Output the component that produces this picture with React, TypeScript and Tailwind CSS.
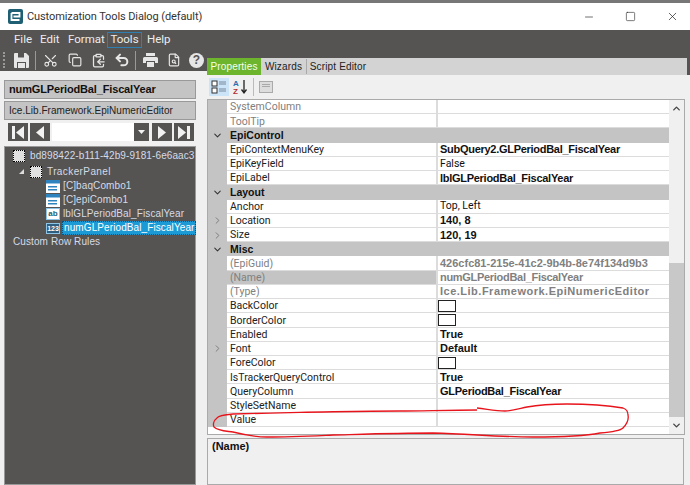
import { ChevronDown, ChevronRight, ChevronUp, ClipboardCopy, Copy, FileSearch, Minus, Scissors, Square, Undo2, X } from 'lucide-react';

type Row = {
  name: string;
  value?: string;
  kind?: 'category' | 'swatch';
  bold?: boolean;
  dim?: boolean;
  expand?: boolean;
  selected?: boolean;
  spacing?: string;
};

const rows: Row[] = [
  { name: 'SystemColumn', dim: true },
  { name: 'ToolTip', dim: true },
  { name: 'EpiControl', kind: 'category' },
  { name: 'EpiContextMenuKey', value: 'SubQuery2.GLPeriodBal_FiscalYear', bold: true, spacing: 'tracking-[-0.28px]' },
  { name: 'EpiKeyField', value: 'False' },
  { name: 'EpiLabel', value: 'lblGLPeriodBal_FiscalYear', bold: true, spacing: 'tracking-[-0.28px]' },
  { name: 'Layout', kind: 'category' },
  { name: 'Anchor', value: 'Top, Left' },
  { name: 'Location', value: '140, 8', bold: true, expand: true },
  { name: 'Size', value: '120, 19', bold: true, expand: true },
  { name: 'Misc', kind: 'category' },
  { name: '(EpiGuid)', value: '426cfc81-215e-41c2-9b4b-8e74f134d9b3', dim: true, bold: true },
  { name: '(Name)', value: 'numGLPeriodBal_FiscalYear', dim: true, bold: true, selected: true, spacing: 'tracking-[-0.3px]' },
  { name: '(Type)', value: 'Ice.Lib.Framework.EpiNumericEditor', dim: true, bold: true, spacing: 'tracking-[0.5px]' },
  { name: 'BackColor', kind: 'swatch' },
  { name: 'BorderColor', kind: 'swatch' },
  { name: 'Enabled', value: 'True', bold: true },
  { name: 'Font', value: 'Default', bold: true, expand: true },
  { name: 'ForeColor', kind: 'swatch' },
  { name: 'IsTrackerQueryControl', value: 'True', bold: true },
  { name: 'QueryColumn', value: 'GLPeriodBal_FiscalYear', bold: true, spacing: 'tracking-[-0.27px]' },
  { name: 'StyleSetName' },
  { name: 'Value' },
];

function PropRow({ row }: { row: Row }) {
  if (row.kind === 'category') {
    return (
      <div className="flex h-[14.23px] items-center bg-[#c4c4c4]">
        <div className="flex w-[19px] shrink-0 justify-center">
          <ChevronDown size={11} strokeWidth={2.2} className="text-[#333]" />
        </div>
        <span className="pl-[3px] font-['Liberation_Sans',sans-serif] text-[10.5px] font-bold text-[#111]">{row.name}</span>
      </div>
    );
  }
  return (
    <div className="flex h-[14.23px]">
      <div className="flex w-[19px] shrink-0 items-center justify-center bg-[#c4c4c4]">
        {row.expand && <ChevronRight size={11} strokeWidth={2} className="text-[#777]" />}
      </div>
      <div
        className={`flex w-[209px] shrink-0 items-center border-b border-[#dcdcdc] pl-[3px] pt-[2px] font-['Roboto',sans-serif] text-[10.5px] ${
          row.selected ? 'bg-[#c4c4c4]' : 'bg-white'
        } ${row.dim ? 'text-[#808080]' : 'text-[#222]'}`}
      >
        {row.name}
      </div>
      <div className="w-[2px] shrink-0 bg-[#dcdcdc]" />
      <div
        className={`flex flex-1 items-center whitespace-nowrap border-b border-[#dcdcdc] bg-white ${row.kind === 'swatch' ? '' : 'pl-[2px] pt-[1px]'} ${
          row.bold ? "font-['Liberation_Sans',sans-serif] font-bold" : "font-['Roboto',sans-serif] text-[10.5px]"
        } ${row.dim ? 'text-[#808080]' : 'text-[#111]'} ${row.spacing ?? ''}`}
      >
        {row.kind === 'swatch' ? <div className="h-[12px] w-[18px] border border-[#222] bg-white" /> : row.value}
      </div>
    </div>
  );
}

function TreeLeaf({ label, icon, selected }: { label: string; icon: React.ReactNode; selected?: boolean }) {
  return (
    <div className="flex h-[14px] items-center pl-[41px]">
      <div className="flex w-[16px] shrink-0 justify-start">{icon}</div>
      <span
        className={`flex h-[14px] flex-1 items-center whitespace-nowrap pl-[1px] ${
          selected ? 'border border-dotted border-[#0d4f75] bg-[#1c9ad6] text-white' : 'text-[#d5dbe6]'
        }`}
      >
        {label}
      </span>
    </div>
  );
}

const ComboIcon = () => (
  <svg width="14" height="13" viewBox="0 0 14 13">
    <rect width="14" height="13" fill="#fff" />
    <rect width="14" height="3.500" fill="#2e84bf" />
    <rect x="2" y="6" width="9" height="1.500" fill="#2e84bf" />
    <rect x="2" y="9" width="9" height="1.500" fill="#2e84bf" />
  </svg>
);

const NodeBox = () => <div className="h-[12px] w-[12px] shrink-0 border border-dotted border-black bg-[#e0e0e0]" />;

function NavButton({ children, wide }: { children: React.ReactNode; wide?: boolean }) {
  return <div className={`flex h-[18px] items-center justify-center bg-[#565452] ${wide ? 'w-[20px]' : 'w-[15px]'}`}>{children}</div>;
}

export default function App() {
  return (
    <div className="flex h-[485px] w-[690px] flex-col overflow-hidden bg-[#565452] font-['Liberation_Sans',sans-serif] text-[11px] leading-none">
      <div className="h-[3px] bg-[#777]" />
      {/* Title bar */}
      <div className="flex h-[27px] items-center bg-white pl-[8px] font-['Roboto',sans-serif] text-[11px] text-[#333]">
        <svg width="15" height="15" viewBox="0 0 15 15" className="shrink-0">
          <rect width="15" height="15" rx="2" fill="#1f5f73" />
          <path d="M3.500 4h8v3.500h-6M3.500 4v7h8" fill="none" stroke="#fff" strokeWidth="1.800" />
        </svg>
        <span className="ml-[4px] tracking-[-0.1px]">Customization Tools Dialog (default)</span>
        <div className="ml-auto flex items-center gap-[30px] pr-[11px] text-[#222]">
          <Minus size={12} strokeWidth={1.300} />
          <Square size={11} strokeWidth={1.300} />
          <X size={13} strokeWidth={1.300} />
        </div>
      </div>

      {/* Menu */}
      <div className="flex h-[19px] items-center pl-[14px] font-['Roboto',sans-serif] text-[11.5px] text-[#ededed]">
        <span className="w-[26px]">File</span>
        <span className="w-[28px]">Edit</span>
        <span className="w-[39px]">Format</span>
        <span className="flex h-[16px] w-[35px] items-center justify-center border border-[#2f7fb0]">Tools</span>
        <span className="ml-[5px]">Help</span>
      </div>

      <div className="flex flex-1">
        {/* Left column */}
        <div className="flex w-[207px] shrink-0 flex-col">
          <div className="flex h-[22px] items-center text-[#e6e6e6]">
            <div className="ml-[3px] h-[16px] w-[3px] border-l-2 border-dotted border-[#999]" />
            <svg width="15" height="15" viewBox="0 0 15 15" className="ml-[8px]">
              <path d="M1 0h11l3 3v11a1 1 0 0 1-1 1H1a1 1 0 0 1-1-1V1a1 1 0 0 1 1-1z" fill="#e6e6e6" />
              <rect x="4" y="0" width="6" height="4.500" fill="#565452" />
              <rect x="3" y="9" width="9" height="6" fill="#565452" />
              <rect x="4" y="10" width="7" height="5" fill="#e6e6e6" />
            </svg>
            <div className="ml-[6px] h-[19px] w-[1px] bg-[#999]" />
            <Scissors size={15} strokeWidth={1.800} className="ml-[7px] -rotate-90" />
            <Copy size={14} strokeWidth={2} className="ml-[10px]" />
            <ClipboardCopy size={15} strokeWidth={2} className="ml-[9px]" />
            <Undo2 size={16} strokeWidth={3} className="ml-[8px]" />
            <div className="ml-[5px] h-[19px] w-[1px] bg-[#999]" />
            <svg width="15" height="14" viewBox="0 0 15 14" className="ml-[7px]">
              <path d="M3 0h9v3H3zM1.500 4h12A1.500 1.500 0 0 1 15 5.500V10h-3V8H3v2H0V5.500A1.500 1.500 0 0 1 1.500 4zM4 9h7v5H4z" fill="#e6e6e6" />
            </svg>
            <FileSearch size={14} strokeWidth={2} className="ml-[9px]" />
            <div className="ml-[8px] flex h-[15px] w-[15px] items-center justify-center rounded-full bg-[#e6e6e6] text-[12px] font-bold text-[#565452]">?</div>
          </div>
          <div className="flex flex-1 flex-col bg-[#f0f0f0] pl-[4px] pr-[11px] pt-[9px]">
            <div className="flex h-[19px] items-center border border-[#999] bg-[#c4c4c4] pl-[4px] tracking-[-0.15px] font-bold text-[#111]">
              numGLPeriodBal_FiscalYear
            </div>
            <div className="mt-[2px] flex h-[19px] items-center border border-[#999] bg-[#c4c4c4] pl-[4px] text-[10px] tracking-[0.03px] text-[#222]">
              Ice.Lib.Framework.EpiNumericEditor
            </div>
            <div className="mt-[3px] flex h-[18px] items-center pl-[4px] pr-[2px]">
              <NavButton wide>
                <svg width="14" height="13" viewBox="0 0 14 13"><path d="M1 0h3v13H1zM13 0v13L5 6.500z" fill="#f2f2f2" /></svg>
              </NavButton>
              <div className="w-[2px]" />
              <NavButton wide>
                <svg width="14" height="13" viewBox="0 0 14 13"><path d="M11 0v13L3 6.500z" fill="#f2f2f2" /></svg>
              </NavButton>
              <div className="ml-[2px] h-[18px] flex-1 bg-white" />
              <NavButton>
                <svg width="7" height="5" viewBox="0 0 7 5"><path d="M0 0h7L3.500 4z" fill="#f2f2f2" /></svg>
              </NavButton>
              <div className="w-[3px]" />
              <NavButton wide>
                <svg width="14" height="13" viewBox="0 0 14 13"><path d="M3 0v13l8-6.500z" fill="#f2f2f2" /></svg>
              </NavButton>
              <div className="w-[2px]" />
              <NavButton wide>
                <svg width="14" height="13" viewBox="0 0 14 13"><path d="M10 0h3v13h-3zM1 0v13l8-6.500z" fill="#f2f2f2" /></svg>
              </NavButton>
            </div>
            <div className="mt-[5px] flex-1 border border-[#999] bg-[#565452] pt-[1px] text-[10px] tracking-[0.1px]">
              <div className="flex h-[16px] items-center gap-[5px] pl-[8px] text-[#d5dbe6]">
                <NodeBox />
                <span className="whitespace-nowrap">bd898422-b111-42b9-9181-6e6aac3</span>
              </div>
              <div className="flex h-[15px] items-center pl-[14px] text-[#d5dbe6]">
                <div className="h-0 w-0 border-b-[5px] border-l-[5px] border-b-[#ddd] border-l-transparent" />
                <div className="ml-[6px]"><NodeBox /></div>
                <span className="ml-[5px] tracking-[0.4px]">TrackerPanel</span>
              </div>
              <TreeLeaf label="[C]baqCombo1" icon={<ComboIcon />} />
              <TreeLeaf label="[C]epiCombo1" icon={<ComboIcon />} />
              <TreeLeaf
                label="lblGLPeriodBal_FiscalYear"
                icon={
                  <div className="flex h-[12px] w-[14px] items-center justify-center border border-[#8ec4e6] bg-white text-[8px] font-bold tracking-normal text-[#1f5f73]">ab</div>
                }
              />
              <TreeLeaf
                label="numGLPeriodBal_FiscalYear"
                selected
                icon={
                  <div className="flex h-[11px] w-[14px] items-center justify-center border border-[#8ec4e6] bg-[#2f5f80] text-[7px] font-bold tracking-normal text-white">123</div>
                }
              />
              <div className="flex h-[14px] items-center pl-[8px] text-[#d5dbe6]">Custom Row Rules</div>
            </div>
          </div>
        </div>

        {/* Right column */}
        <div className="flex flex-1 flex-col">
          <div className="h-[9px]" />
          <div className="mr-[3px] flex h-[17px] items-stretch bg-[#d3d3d3] text-[10px] tracking-[0.15px] text-[#222]">
            <div className="flex w-[54px] items-center justify-center bg-[#6cb52d] text-[#f4fff0]">Properties</div>
            <div className="flex w-[45px] items-center justify-center">Wizards</div>
            <div className="my-[1px] w-[1px] bg-[#aaa]" />
            <div className="flex w-[62px] items-center justify-center">Script Editor</div>
          </div>
          <div className="flex flex-1 flex-col bg-[#f0f0f0]">
            <div className="flex h-[24px] items-center pl-[2px]">
              <div className="flex h-[18px] w-[20px] items-center justify-center bg-[#cce4f7]">
                <svg width="16" height="14" viewBox="0 0 16 14">
                  <rect x="1" y="1" width="5" height="5" fill="#fff" stroke="#333" />
                  <rect x="1" y="8" width="5" height="5" fill="#fff" stroke="#333" />
                  <path d="M8 2h7M8 4h7M8 9h7M8 11h7" stroke="#789" strokeWidth="1" />
                </svg>
              </div>
              <div className="ml-[3px] flex h-[17px] w-[16px] items-center justify-center">
                <svg width="15" height="16" viewBox="0 0 15 16">
                  <text x="0" y="7" fontSize="8" fontWeight="700" fill="#2a6fb0" fontFamily="Liberation Sans">A</text>
                  <text x="0" y="15" fontSize="8" fontWeight="700" fill="#b03030" fontFamily="Liberation Sans">Z</text>
                  <path d="M11 1v12M8.500 10.500 11 14l2.500-3.500" fill="none" stroke="#222" strokeWidth="1.300" />
                </svg>
              </div>
              <div className="ml-[5px] h-[18px] w-[1px] bg-[#bbb]" />
              <div className="ml-[5px] flex h-[12px] w-[14px] flex-col gap-[1px] border border-[#aaa] bg-[#ddd] p-[2px]">
                <div className="h-[1px] bg-[#aaa]" />
                <div className="h-[1px] bg-[#aaa]" />
              </div>
            </div>
            <div className="mr-[5px] flex h-[336px] border-y border-l border-r border-[#aaa]">
              <div className="flex-1 bg-white">
                {rows.map((row) => (
                  <PropRow key={row.name} row={row} />
                ))}
              </div>
              <div className="flex w-[15px] shrink-0 flex-col bg-[#f0f0f0] text-[#444]">
                <div className="flex h-[163px] justify-center pt-[3px]">
                  <ChevronUp size={11} strokeWidth={3} />
                </div>
                <div className="h-[154px] bg-[#c8c8c8]" />
                <div className="flex flex-1 items-center justify-center">
                  <ChevronDown size={11} strokeWidth={3} />
                </div>
              </div>
            </div>
            <div className="mr-[6px] mt-[3px] flex-1 border border-[#aaa] bg-[#f0f0f0] pl-[4px] pt-[2px] font-bold text-[#111]">(Name)</div>
          </div>
        </div>
      </div>

      {/* Red pen annotation */}
      <svg width="690" height="485" viewBox="0 0 690 485" className="pointer-events-none absolute left-0 top-0">
        <path
          d="M477 410C450 410 420 411 400 411C360 411 330 412 300 412.300C280 413 250 413.500 233 414C222 415 218 416 217 418C213 421 213 425 214 427C218 431 226 431 233 432C245 435 255 437 267 437C290 437 310 436 333 435C370 434 400 433 433 433C470 434 500 437 533 437C560 437 585 436 600 433C612 432 620 431 623 428C627 424 629 420 628 415C628 411 626 409 623 408C605 405 585 404 567 404C550 404 538 405 527 407C518 409 512 411 505 411C495 411 487 409 477 408"
          fill="none"
          stroke="#e8141c"
          strokeWidth="1.300"
        />
      </svg>
    </div>
  );
}
